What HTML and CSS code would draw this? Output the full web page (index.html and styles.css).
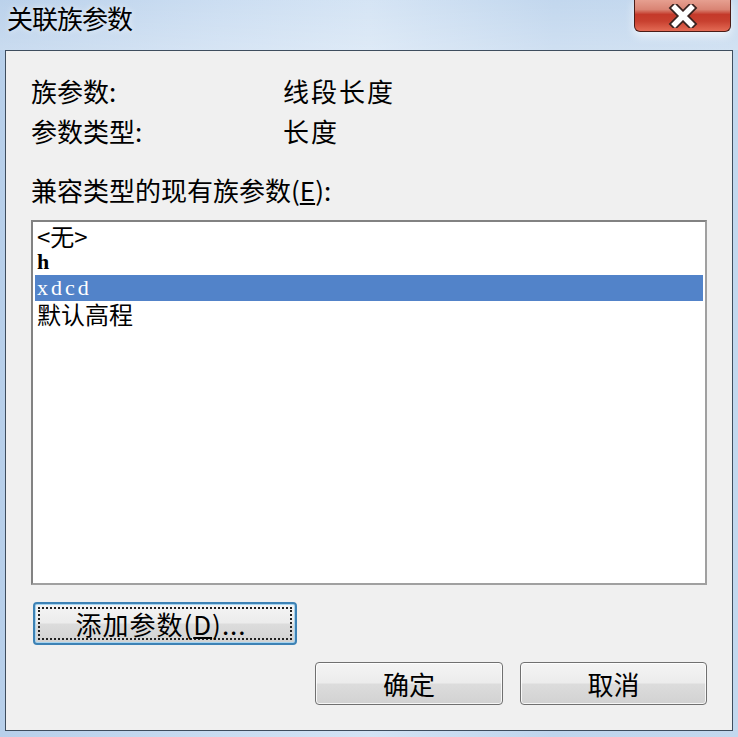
FILE: index.html
```html
<!DOCTYPE html>
<html lang="zh">
<head>
<meta charset="utf-8">
<title>关联族参数</title>
<link rel="stylesheet" href="styles.css">
</head>
<body>
<div class="window">
  <div class="titlebar">
    <span class="title">关联族参数</span>
    <button class="close" aria-label="关闭">
      <svg width="30" height="24" viewBox="0 0 30 24">
        <path d="M7 4 L23 20 M23 4 L7 20" stroke="#3a2320" stroke-width="9" stroke-linecap="square" fill="none"/>
        <path d="M7 4 L23 20 M23 4 L7 20" stroke="#ffffff" stroke-width="5.5" stroke-linecap="square" fill="none"/>
      </svg>
    </button>
  </div>
  <div class="client">
    <div class="info">
      <div class="info-row"><span class="label">族参数:</span><span class="value">线段长度</span></div>
      <div class="info-row"><span class="label">参数类型:</span><span class="value">长度</span></div>
    </div>
    <div class="list-label">兼容类型的现有族参数(<u>E</u>):</div>
    <div class="listbox">
      <div class="item">&lt;无&gt;</div>
      <div class="item latin bold">h</div>
      <div class="item latin selected">xdcd</div>
      <div class="item">默认高程</div>
    </div>
    <div class="add-row">
      <button class="btn btn-add"><span class="focus">添加参数(<u>D</u>)...</span></button>
    </div>
    <div class="actions">
      <button class="btn">确定</button>
      <button class="btn">取消</button>
    </div>
  </div>
</div>
</body>
</html>
```
FILE: styles.css
```css
html, body {
  margin: 0;
  padding: 0;
}
body {
  width: 738px;
  height: 737px;
  overflow: hidden;
  font-family: "Noto Sans CJK SC", "Noto Sans", sans-serif;
  font-size: 26px;
  color: #000;
}
.window {
  width: 738px;
  height: 737px;
  display: flex;
  flex-direction: column;
  background: linear-gradient(90deg, #b7cfea 0%, #c9dcf1 30%, #d3e3f4 50%, #bfd5ed 75%, #c3d8ee 100%);
}
.titlebar {
  position: relative;
  height: 50px;
  flex: none;
  display: flex;
  align-items: flex-start;
  background: linear-gradient(180deg, rgba(255,255,255,0.05) 0%, rgba(255,255,255,0.25) 100%);
}
.title {
  margin: 2px 0 0 7px;
  font-size: 26px;
  line-height: 32px;
  letter-spacing: -1px;
  color: #000;
  text-shadow: 0 0 6px rgba(255,255,255,0.8);
}
.close {
  position: absolute;
  left: 634px;
  top: -2px;
  width: 97px;
  height: 34px;
  padding: 0;
  border: 1px solid #4a1c17;
  border-top: none;
  border-radius: 0 0 6px 6px;
  background: linear-gradient(180deg, #e9a596 0%, #d98474 35%, #c4392a 50%, #c8402f 70%, #e36b55 100%);
  box-shadow: inset 0 1px 0 rgba(255,255,255,0.5), 0 4px 10px rgba(255,255,255,0.7);
  display: flex;
  align-items: center;
  justify-content: center;
}
.close svg {
  display: block;
  margin-top: 2px;
}
.client {
  flex: 1;
  margin: 0 5px 6px 5px;
  border: 1px solid #3e4d5e;
  background: #f0f0f0;
  display: flex;
  flex-direction: column;
  padding: 25px 25px 25px 25px;
}
.info {
  display: flex;
  flex-direction: column;
  gap: 10px;
}
.info-row {
  display: flex;
  line-height: 30px;
}
.label {
  width: 252px;
  flex: none;
}
.value {
  letter-spacing: 2px;
}
.list-label {
  margin-top: 29px;
  line-height: 30px;
}
.listbox {
  margin-top: 15px;
  height: 365px;
  box-sizing: border-box;
  border: 2px solid #828282;
  border-right-color: #a0a0a0;
  border-bottom-color: #a0a0a0;
  background: #fff;
  padding: 0 2px;
  display: flex;
  flex-direction: column;
}
.item {
  height: 26px;
  line-height: 26px;
  padding-left: 2px;
  font-size: 24px;
  white-space: nowrap;
}
.item:first-child {
  margin-top: 1px;
}
.latin {
  font-family: "Liberation Serif", "DejaVu Serif", serif;
  font-size: 22px;
  letter-spacing: 3px;
}
.bold {
  font-weight: bold;
}
.selected {
  background: #5283c9;
  color: #fff;
}
.add-row {
  margin-top: 17px;
  display: flex;
}
.btn {
  font-family: inherit;
  font-size: 26px;
  color: #000;
  height: 43px;
  width: 188px;
  padding: 0;
  border: 1px solid #707070;
  border-radius: 4px;
  background: linear-gradient(180deg, #f4f4f4 0%, #ececec 48%, #dcdcdc 52%, #d2d2d2 100%);
  box-shadow: inset 0 0 0 1px rgba(255,255,255,0.8);
  display: flex;
  align-items: center;
  justify-content: center;
  line-height: 30px;
}
.btn-add {
  margin-left: 2px;
  width: 264px;
  border: 2px solid #3d82b5;
  box-shadow: inset 0 0 0 1px #a6d4f0;
  padding: 3px;
  align-items: stretch;
}
.focus {
  flex: 1;
  border: 2px dotted #222;
  display: flex;
  align-items: center;
  justify-content: center;
  padding-right: 8px;
  letter-spacing: 1px;
}
.actions {
  margin-top: 17px;
  display: flex;
  justify-content: flex-end;
  gap: 17px;
}
.actions .btn:last-child {
  width: 187px;
}
u {
  text-decoration: underline;
  text-underline-offset: 2px;
}
```
